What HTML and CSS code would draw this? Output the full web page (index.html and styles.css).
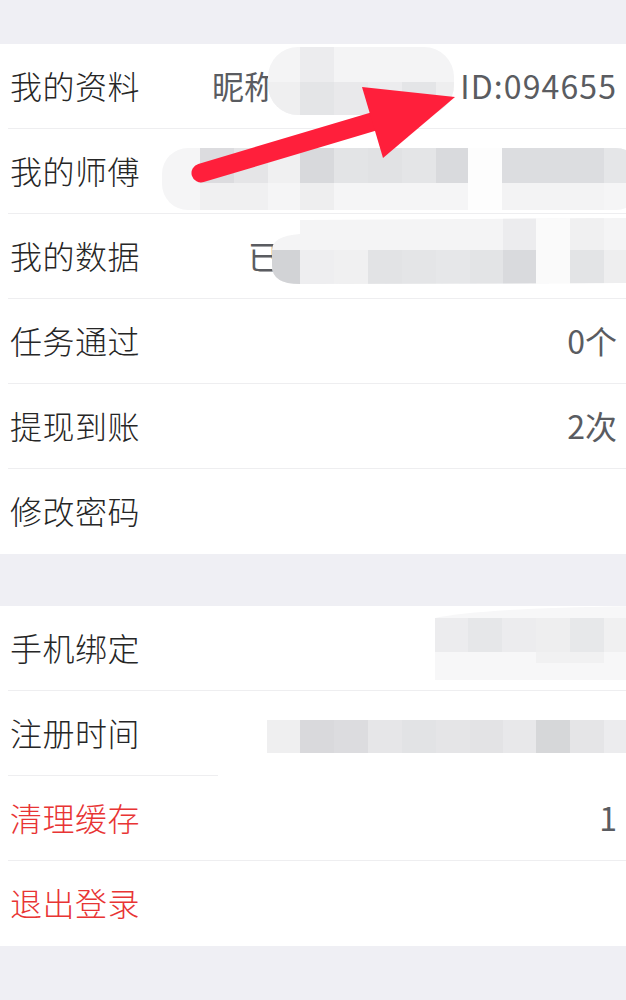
FILE: index.html
```html
<!DOCTYPE html>
<html lang="zh-CN">
<head>
<meta charset="utf-8">
<title>设置</title>
<link rel="stylesheet" href="styles.css">
</head>
<body>
<div class="page">
  <div class="gap gap-top"></div>
  <section class="group">
    <div class="row">
      <span class="label">我的资料</span>
      <span class="value nick">昵称</span>
      <span class="value id">ID:094655</span>
    </div>
    <div class="row">
      <span class="label">我的师傅</span>
    </div>
    <div class="row">
      <span class="label">我的数据</span>
      <span class="value done">已</span>
    </div>
    <div class="row">
      <span class="label">任务通过</span>
      <span class="value end">0个</span>
    </div>
    <div class="row">
      <span class="label">提现到账</span>
      <span class="value end">2次</span>
    </div>
    <div class="row">
      <span class="label">修改密码</span>
    </div>
  </section>
  <div class="gap gap-mid"></div>
  <section class="group">
    <div class="row">
      <span class="label">手机绑定</span>
    </div>
    <div class="row row-short">
      <span class="label">注册时间</span>
    </div>
    <div class="row">
      <span class="label danger">清理缓存</span>
      <span class="value end">1</span>
    </div>
    <div class="row">
      <span class="label danger">退出登录</span>
    </div>
  </section>
  <div class="gap gap-bottom"></div>

  <svg class="overlay" width="626" height="1000" viewBox="0 0 626 1000" aria-hidden="true">
    <defs>
      <clipPath id="c1"><rect x="268" y="47" width="186" height="68" rx="30"/></clipPath>
      <clipPath id="c2"><rect x="162" y="148" width="480" height="62" rx="26"/></clipPath>
      <clipPath id="c3"><path d="M300 220 L640 218 L640 283 L300 284 Q272 284 272 266 L272 250 Q272 236 300 234 Z"/></clipPath>
      <clipPath id="c5"><path d="M435 618 Q480 608 640 606 L640 680 L435 680 Z"/></clipPath>
    </defs>
    <g clip-path="url(#c1)">
      <rect x="268" y="47" width="186" height="68" fill="#f4f4f5"/>
      <rect x="300" y="47" width="34" height="35" fill="#ececee"/>
      <rect x="268" y="82" width="32" height="33" fill="#efeff0"/>
      <rect x="300" y="82" width="34" height="33" fill="#e4e5e7"/>
      <rect x="334" y="82" width="34" height="33" fill="#e9e9eb"/>
      <rect x="368" y="82" width="34" height="33" fill="#ececee"/>
      <rect x="402" y="82" width="34" height="33" fill="#e4e5e7"/>
      <rect x="436" y="82" width="18" height="33" fill="#eeeeef"/>
    </g>
    <g clip-path="url(#c2)">
      <rect x="162" y="148" width="470" height="62" fill="#f5f5f6"/>
      <rect x="200" y="148" width="34" height="35" fill="#dcdcdf"/>
      <rect x="234" y="148" width="34" height="35" fill="#e5e5e7"/>
      <rect x="268" y="148" width="32" height="35" fill="#f0f0f1"/>
      <rect x="300" y="148" width="34" height="35" fill="#d8d9dc"/>
      <rect x="334" y="148" width="34" height="35" fill="#e3e4e6"/>
      <rect x="368" y="148" width="34" height="35" fill="#e1e2e4"/>
      <rect x="402" y="148" width="34" height="35" fill="#e4e5e7"/>
      <rect x="436" y="148" width="32" height="35" fill="#d9dadd"/>
      <rect x="468" y="148" width="34" height="62" fill="#fdfdfd"/>
      <rect x="502" y="148" width="102" height="35" fill="#dcdde0"/>
      <rect x="604" y="148" width="30" height="35" fill="#e5e6e8"/>
      <rect x="200" y="183" width="68" height="27" fill="#f0f0f1"/>
      <rect x="300" y="183" width="34" height="27" fill="#eeeeef"/>
      <rect x="502" y="183" width="102" height="27" fill="#f3f3f4"/>
    </g>
    <g clip-path="url(#c3)">
      <rect x="272" y="218" width="360" height="66" fill="#f4f4f5"/>
      <rect x="503" y="218" width="33" height="32" fill="#ececee"/>
      <rect x="536" y="218" width="34" height="66" fill="#fafafa"/>
      <rect x="570" y="218" width="34" height="32" fill="#f0f0f1"/>
      <rect x="272" y="250" width="28" height="34" fill="#d2d3d6"/>
      <rect x="300" y="250" width="34" height="34" fill="#eeeef0"/>
      <rect x="334" y="250" width="34" height="34" fill="#f0f0f1"/>
      <rect x="368" y="250" width="34" height="34" fill="#e2e3e5"/>
      <rect x="402" y="250" width="34" height="34" fill="#e4e5e7"/>
      <rect x="436" y="250" width="34" height="34" fill="#e6e7e9"/>
      <rect x="470" y="250" width="33" height="34" fill="#e3e4e6"/>
      <rect x="503" y="250" width="33" height="34" fill="#d9dadd"/>
      <rect x="570" y="250" width="34" height="34" fill="#e3e4e6"/>
      <rect x="604" y="250" width="30" height="34" fill="#eeeeef"/>
    </g>
    <g clip-path="url(#c5)">
      <rect x="435" y="606" width="200" height="74" fill="#f7f7f8"/>
      <rect x="435" y="618" width="33" height="34" fill="#ececee"/>
      <rect x="468" y="618" width="34" height="34" fill="#e6e7e9"/>
      <rect x="502" y="618" width="34" height="34" fill="#ececee"/>
      <rect x="536" y="618" width="34" height="34" fill="#eeeeef"/>
      <rect x="570" y="618" width="34" height="34" fill="#e7e8ea"/>
      <rect x="604" y="618" width="30" height="34" fill="#f0f0f1"/>
      <rect x="536" y="652" width="68" height="11" fill="#f1f1f2"/>
    </g>
    <g>
      <rect x="267" y="720" width="33" height="33" fill="#efeff0"/>
      <rect x="300" y="720" width="34" height="33" fill="#d9d9dc"/>
      <rect x="334" y="720" width="34" height="33" fill="#dcdcdf"/>
      <rect x="368" y="720" width="34" height="33" fill="#e6e6e8"/>
      <rect x="402" y="720" width="34" height="33" fill="#e2e3e5"/>
      <rect x="436" y="720" width="34" height="33" fill="#e5e5e7"/>
      <rect x="470" y="720" width="33" height="33" fill="#e3e3e5"/>
      <rect x="503" y="720" width="33" height="33" fill="#e8e8ea"/>
      <rect x="536" y="720" width="34" height="33" fill="#d6d7d9"/>
      <rect x="570" y="720" width="34" height="33" fill="#e5e5e7"/>
      <rect x="604" y="720" width="22" height="33" fill="#ececee"/>
    </g>
    <line x1="201" y1="173" x2="382" y2="119" stroke="#ff1f3b" stroke-width="19" stroke-linecap="round"/>
    <polygon points="362,87 455,97 383,158" fill="#ff1f3b"/>
  </svg>
</div>
</body>
</html>
```

FILE: styles.css
```css
* {
  box-sizing: border-box;
}

html, body {
  margin: 0;
  padding: 0;
}

body {
  background: #efeff4;
  font-family: "Noto Sans CJK SC", "Noto Sans", sans-serif;
  font-weight: 300;
  color: #2e2e2e;
  width: 626px;
  height: 1000px;
  overflow: hidden;
}

.page {
  position: relative;
  width: 626px;
  height: 1000px;
}

.gap-top {
  height: 44px;
}

.gap-mid {
  height: 52px;
}

.group {
  background: #ffffff;
}

.row {
  display: flex;
  align-items: center;
  height: 85px;
  margin-left: 8px;
  padding: 0 9px 3px 2px;
  border-bottom: 1px solid #eeeef0;
  font-size: 32px;
  line-height: 1;
}

.row:last-child {
  border-bottom: none;
}

.row-short {
  border-bottom: none;
  background-image: linear-gradient(#eeeef0, #eeeef0);
  background-size: 210px 1px;
  background-position: left bottom;
  background-repeat: no-repeat;
}

.label {
  color: #262626;
  letter-spacing: 0.5px;
}

.danger {
  color: #e83434;
}

.value {
  color: #5a5c61;
  font-weight: 400;
}

.nick {
  margin-left: 72px;
}

.id {
  margin-left: auto;
  letter-spacing: 1.1px;
}

.done {
  margin-left: 108px;
}

.end {
  margin-left: auto;
}

.overlay {
  position: absolute;
  left: 0;
  top: 0;
  pointer-events: none;
}
```
